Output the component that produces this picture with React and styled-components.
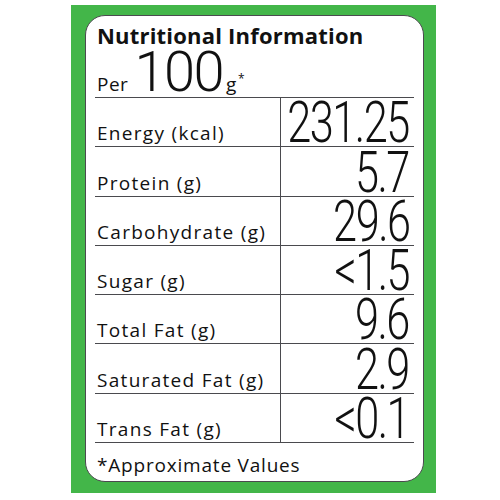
import styled, { createGlobalStyle } from "styled-components";

const GlobalStyle = createGlobalStyle`
    html, body {
        margin: 0;
        padding: 0;
        background: #ffffff;
    }
    body {
        font-family: "Open Sans", "Liberation Sans", sans-serif;
        color: #111111;
    }
`;

const nutrients = [
    { label: "Energy (kcal)", value: "231.25" },
    { label: "Protein (g)", value: "5.7" },
    { label: "Carbohydrate (g)", value: "29.6" },
    { label: "Sugar (g)", value: "<1.5" },
    { label: "Total Fat (g)", value: "9.6" },
    { label: "Saturated Fat (g)", value: "2.9" },
    { label: "Trans Fat (g)", value: "<0.1" },
];

function App() {
    return (
        <Page>
            <GlobalStyle />
            <GreenPanel>
                <Card>
                    <Title>Nutritional Information</Title>
                    <PerLine>
                        <span>Per</span>
                        <Big>100</Big>
                        <span>g<sup>*</sup></span>
                    </PerLine>
                    <Table>
                        {nutrients.map((n) => (
                            <Row key={n.label}>
                                <Label>{n.label}</Label>
                                <Value>
                                    <Digits>{n.value}</Digits>
                                </Value>
                            </Row>
                        ))}
                    </Table>
                    <Footnote>*Approximate Values</Footnote>
                </Card>
            </GreenPanel>
        </Page>
    );
}

const Page = styled.div`
    width: 500px;
    height: 500px;
    padding-top: 5px;
    padding-left: 71px;
    box-sizing: border-box;
`;

const GreenPanel = styled.div`
    width: 365px;
    height: 488px;
    box-sizing: border-box;
    padding: 10px 12px 11px 14px;
    background: #43b649;
`;

const Card = styled.div`
    height: 100%;
    box-sizing: border-box;
    display: flex;
    flex-direction: column;
    padding: 0 9px 0 9px;
    background: #ffffff;
    border: 1.5px solid #4a4a4e;
    border-radius: 20px;
`;

const Title = styled.div`
    height: 36px;
    padding-left: 2px;
    font-size: 22px;
    font-weight: 700;
    line-height: 38px;
    letter-spacing: 0.2px;
`;

const PerLine = styled.div`
    display: flex;
    align-items: baseline;
    height: 45px;
    padding-left: 2px;
    font-size: 19px;
    line-height: 40px;
    letter-spacing: 0.5px;

    sup {
        font-size: 12px;
        vertical-align: 8px;
        margin-left: 1px;
    }
`;

const Big = styled.span`
    margin: 0 3px 0 6px;
    font-family: Roboto, "Liberation Sans", sans-serif;
    font-weight: 300;
    font-size: 56px;
    letter-spacing: -1.5px;
`;

const Table = styled.div`
    display: flex;
    flex-direction: column;
    border-top: 1.5px solid #4a4a4e;
`;

const Row = styled.div`
    display: grid;
    grid-template-columns: 186px 1fr;
    height: 49.3px;
    box-sizing: border-box;
    border-bottom: 1.5px solid #4a4a4e;
`;

const Label = styled.div`
    display: flex;
    align-items: flex-end;
    padding: 0 0 1px 2px;
    font-size: 19px;
    line-height: 24px;
    letter-spacing: 1.3px;
    white-space: nowrap;
    border-right: 1.5px solid #4a4a4e;
`;

const Value = styled.div`
    display: flex;
    align-items: flex-end;
    justify-content: flex-end;
    padding: 0 5px 1px 0;
    min-width: 0;
    font-family: Roboto, "Liberation Sans", sans-serif;
    font-weight: 300;
    font-size: 57px;
    line-height: 44px;
    letter-spacing: -2px;
`;

const Digits = styled.span`
    display: inline-block;
    white-space: nowrap;
    transform: scaleX(0.76);
    transform-origin: right bottom;
`;

const Footnote = styled.div`
    padding: 10px 0 0 2px;
    font-size: 19px;
    line-height: 24px;
    letter-spacing: 0.8px;
`;

export default App;
